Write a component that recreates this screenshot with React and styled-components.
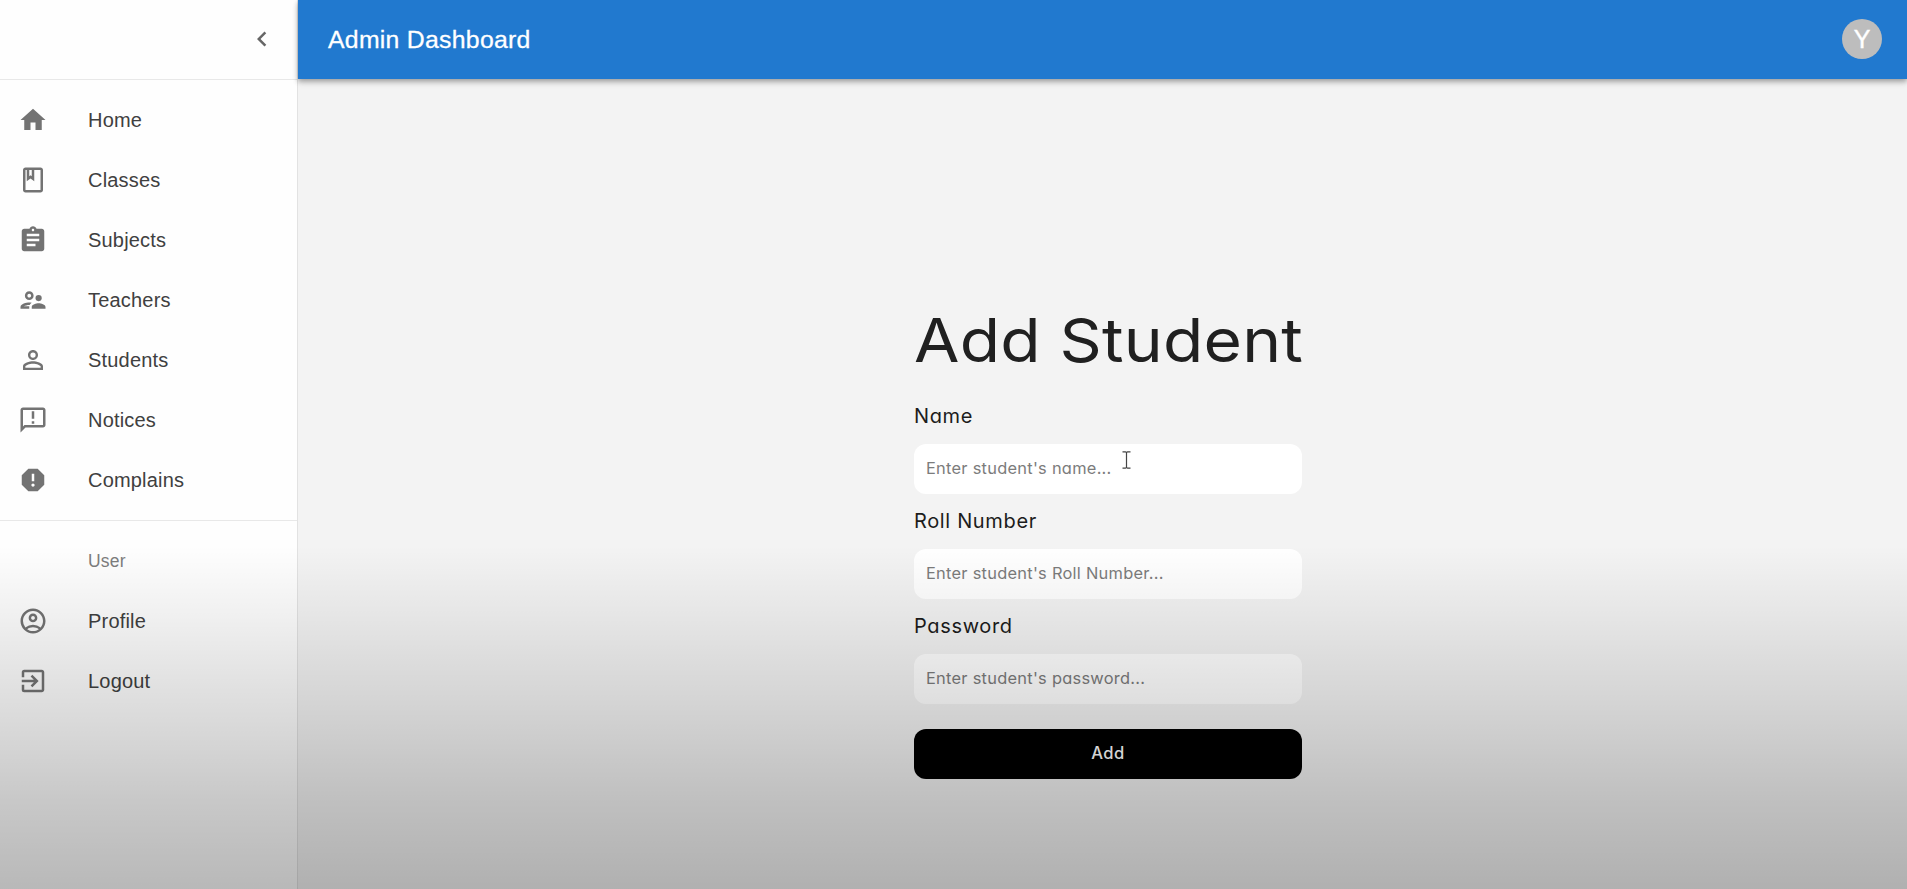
import React from 'react';
import styled, { createGlobalStyle } from 'styled-components';
import {
  MdHome,
  MdOutlineClass,
  MdAssignment,
  MdOutlineSupervisorAccount,
  MdPersonOutline,
  MdOutlineAnnouncement,
  MdReport,
  MdOutlineAccountCircle,
  MdExitToApp,
  MdChevronLeft,
} from 'react-icons/md';

const GlobalStyle = createGlobalStyle`
  *, *::before, *::after { box-sizing: border-box; }
  body {
    margin: 0;
    overflow: hidden;
    font-family: "Liberation Sans", Arial, sans-serif;
  }
`;

const Page = styled.div`
  position: relative;
  display: flex;
  height: 100vh;
  background: #f3f3f3;
`;

const Shade = styled.div`
  position: absolute;
  inset: 545px 0 0 0;
  z-index: 5;
  pointer-events: none;
  background: linear-gradient(
    to bottom,
    rgba(0, 0, 0, 0) 0%,
    rgba(0, 0, 0, 0.05) 19%,
    rgba(0, 0, 0, 0.085) 31%,
    rgba(0, 0, 0, 0.127) 45%,
    rgba(0, 0, 0, 0.168) 60%,
    rgba(0, 0, 0, 0.213) 74%,
    rgba(0, 0, 0, 0.275) 100%
  );
`;

const Sidebar = styled.aside`
  flex: none;
  width: 298px;
  background: #fefefe;
  border-right: 1px solid #e2e2e2;
`;

const SidebarHeader = styled.div`
  display: flex;
  align-items: center;
  justify-content: flex-end;
  height: 79px;
  padding: 0 20px 1px 0;
  color: #666;
`;

const Divider = styled.hr`
  height: 1px;
  margin: 0;
  border: 0;
  background: #e8e8e8;
`;

const MenuList = styled.nav`
  padding: 10px 0;
`;

const MenuItem = styled.a`
  display: flex;
  align-items: center;
  height: 60px;
  padding-left: 18px;
  font-size: 20px;
  letter-spacing: 0.19px;
  color: #404040;
`;

const MenuIcon = styled.span`
  display: flex;
  width: 70px;
  color: #737373;
`;

const SectionLabel = styled.div`
  height: 60px;
  padding-left: 88px;
  line-height: 60px;
  font-size: 17.5px;
  letter-spacing: 0.17px;
  color: #7d7d7d;
`;

const Content = styled.div`
  flex: 1;
  display: flex;
  flex-direction: column;
`;

const AppBar = styled.header`
  display: flex;
  align-items: center;
  justify-content: space-between;
  height: 79px;
  padding: 0 25px 1px 30px;
  background: #2179cf;
  color: #fff;
  box-shadow: 0 2px 5px rgba(0, 0, 0, 0.28), 0 4px 6px rgba(0, 0, 0, 0.12);
`;

const AppTitle = styled.h1`
  margin: 0;
  padding-top: 2px;
  font-size: 24.8px;
  font-weight: 400;
  letter-spacing: 0.28px;
  -webkit-text-stroke: 0.3px #fff;
`;

const Avatar = styled.div`
  display: flex;
  align-items: center;
  justify-content: center;
  width: 40px;
  height: 40px;
  border-radius: 50%;
  background: #bdbdbd;
  font-size: 25px;
  -webkit-text-stroke: 0.4px #fff;
`;

const Main = styled.main`
  display: flex;
  justify-content: center;
  padding: 215px 0 0 0;
`;

const Form = styled.form`
  display: flex;
  flex-direction: column;
  width: 388px;
  margin-left: 11px;
  font-family: Inter, "Open Sans", sans-serif;
  font-feature-settings: "cv11" 1;
`;

const FormTitle = styled.h2`
  margin: 0 0 13.5px 0;
  height: 92px;
  line-height: 92px;
  font-size: 61px;
  font-weight: 400;
  letter-spacing: 0.2px;
  white-space: nowrap;
  color: #202020;
  transform: scaleX(1.08);
  transform-origin: left center;
`;

const Label = styled.label`
  height: 32px;
  margin-bottom: 12px;
  line-height: 32px;
  font-size: 20px;
  letter-spacing: 0.65px;
  color: #1c1c1c;
`;

const InputWrap = styled.div`
  position: relative;
  display: flex;
  margin-bottom: 11px;
`;

const Input = styled.input`
  width: 100%;
  height: 50px;
  padding: 0 12px 2px;
  border: 0;
  border-radius: 12px;
  background: #fff;
  font: inherit;
  font-feature-settings: inherit;
  font-size: 16.4px;
  letter-spacing: 0.27px;
  &::placeholder {
    color: #7c7c7c;
    opacity: 1;
  }
`;

const TextCursor = styled.svg`
  position: absolute;
  left: 208px;
  top: 7px;
`;

const SubmitButton = styled.button`
  height: 50px;
  margin-top: 14px;
  padding: 0 0 2px;
  border: 0;
  border-radius: 12px;
  background: #000;
  color: #fff;
  font: inherit;
  font-feature-settings: inherit;
  font-size: 16.6px;
  font-weight: 500;
  letter-spacing: 0.4px;
`;

const mainItems = [
  ['Home', MdHome],
  ['Classes', MdOutlineClass],
  ['Subjects', MdAssignment],
  ['Teachers', MdOutlineSupervisorAccount],
  ['Students', MdPersonOutline],
  ['Notices', MdOutlineAnnouncement],
  ['Complains', MdReport],
];

const userItems = [
  ['Profile', MdOutlineAccountCircle],
  ['Logout', MdExitToApp],
];

const fields = [
  ['Name', "Enter student's name...", 'text'],
  ['Roll Number', "Enter student's Roll Number...", 'text'],
  ['Password', "Enter student's password...", 'password'],
];

const renderItem = ([text, Icon]) => (
  <MenuItem key={text}>
    <MenuIcon>
      <Icon size={30} />
    </MenuIcon>
    {text}
  </MenuItem>
);

export default function App() {
  return (
    <Page>
      <GlobalStyle />
      <Sidebar>
        <SidebarHeader>
          <MdChevronLeft size={30} />
        </SidebarHeader>
        <Divider />
        <MenuList>{mainItems.map(renderItem)}</MenuList>
        <Divider />
        <MenuList>
          <SectionLabel>User</SectionLabel>
          {userItems.map(renderItem)}
        </MenuList>
      </Sidebar>
      <Content>
        <AppBar>
          <AppTitle>Admin Dashboard</AppTitle>
          <Avatar>Y</Avatar>
        </AppBar>
        <Main>
          <Form>
            <FormTitle>Add Student</FormTitle>
            {fields.map(([label, placeholder, type], i) => (
              <React.Fragment key={label}>
                <Label>{label}</Label>
                <InputWrap>
                  <Input type={type} placeholder={placeholder} />
                  {i === 0 && (
                    <TextCursor width="9" height="18" viewBox="0 0 9 18" fill="none" stroke="#444" strokeWidth="1.2">
                      <path d="M0.5 0.8H3.4L4.5 1.6L5.6 0.8H8.5M4.5 1.6V16.4M0.5 17.2H3.4L4.5 16.4L5.6 17.2H8.5" />
                    </TextCursor>
                  )}
                </InputWrap>
              </React.Fragment>
            ))}
            <SubmitButton type="button">Add</SubmitButton>
          </Form>
        </Main>
      </Content>
      <Shade />
    </Page>
  );
}
